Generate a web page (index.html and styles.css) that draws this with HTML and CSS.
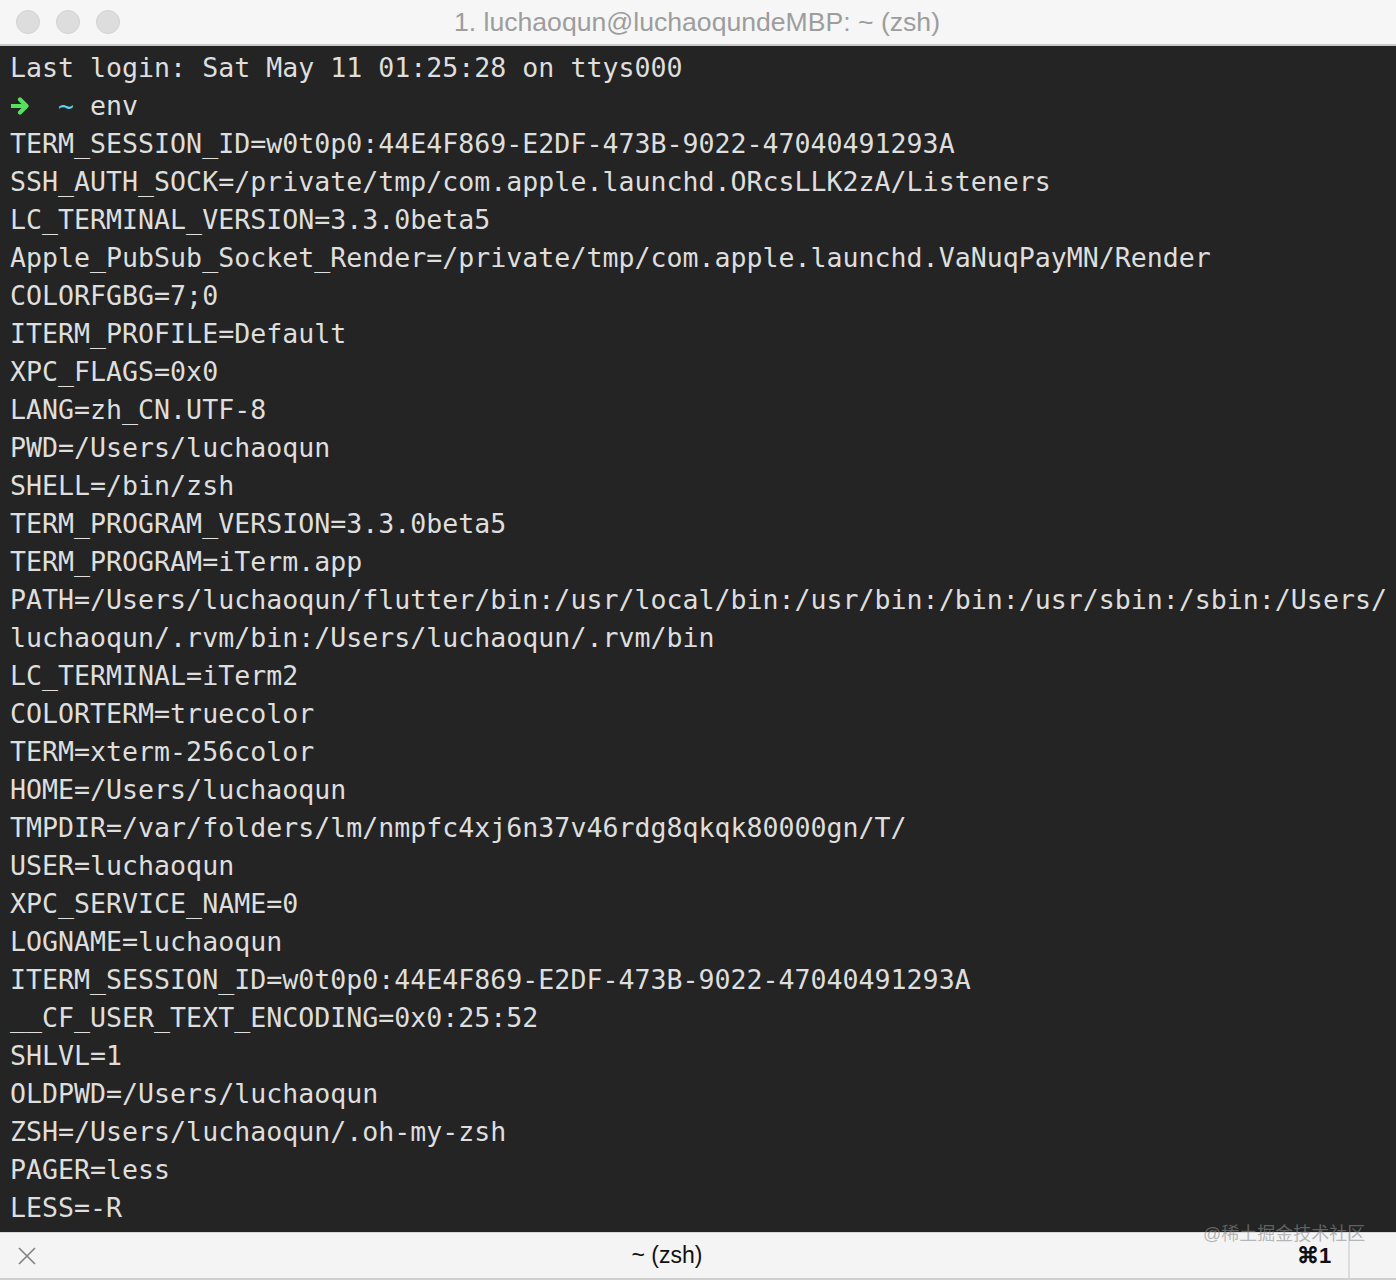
FILE: index.html
```html
<!DOCTYPE html>
<html>
<head>
<meta charset="utf-8">
<link rel="stylesheet" href="styles.css">
</head>
<body>
<div class="window">
  <div class="titlebar">
    <div class="lights">
      <span class="light"></span><span class="light"></span><span class="light"></span>
    </div>
    <div class="title">1. luchaoqun@luchaoqundeMBP: ~ (zsh)</div>
  </div>
  <div class="term">
<div class="line">Last login: Sat May 11 01:25:28 on ttys000</div>
<div class="line"><span class="arrow"><svg width="22" height="18" viewBox="0 0 22 18"><path d="M1 9 H14 M9 2.5 L15.5 9 L9 15.5" stroke="#55e05e" stroke-width="4.2" fill="none" stroke-linecap="round" stroke-linejoin="round"/></svg></span>  <span class="tilde">~</span> env</div>
<div class="line">TERM_SESSION_ID=w0t0p0:44E4F869-E2DF-473B-9022-47040491293A</div>
<div class="line">SSH_AUTH_SOCK=/private/tmp/com.apple.launchd.ORcsLLK2zA/Listeners</div>
<div class="line">LC_TERMINAL_VERSION=3.3.0beta5</div>
<div class="line">Apple_PubSub_Socket_Render=/private/tmp/com.apple.launchd.VaNuqPayMN/Render</div>
<div class="line">COLORFGBG=7;0</div>
<div class="line">ITERM_PROFILE=Default</div>
<div class="line">XPC_FLAGS=0x0</div>
<div class="line">LANG=zh_CN.UTF-8</div>
<div class="line">PWD=/Users/luchaoqun</div>
<div class="line">SHELL=/bin/zsh</div>
<div class="line">TERM_PROGRAM_VERSION=3.3.0beta5</div>
<div class="line">TERM_PROGRAM=iTerm.app</div>
<div class="line">PATH=/Users/luchaoqun/flutter/bin:/usr/local/bin:/usr/bin:/bin:/usr/sbin:/sbin:/Users/</div>
<div class="line">luchaoqun/.rvm/bin:/Users/luchaoqun/.rvm/bin</div>
<div class="line">LC_TERMINAL=iTerm2</div>
<div class="line">COLORTERM=truecolor</div>
<div class="line">TERM=xterm-256color</div>
<div class="line">HOME=/Users/luchaoqun</div>
<div class="line">TMPDIR=/var/folders/lm/nmpfc4xj6n37v46rdg8qkqk80000gn/T/</div>
<div class="line">USER=luchaoqun</div>
<div class="line">XPC_SERVICE_NAME=0</div>
<div class="line">LOGNAME=luchaoqun</div>
<div class="line">ITERM_SESSION_ID=w0t0p0:44E4F869-E2DF-473B-9022-47040491293A</div>
<div class="line">__CF_USER_TEXT_ENCODING=0x0:25:52</div>
<div class="line">SHLVL=1</div>
<div class="line">OLDPWD=/Users/luchaoqun</div>
<div class="line">ZSH=/Users/luchaoqun/.oh-my-zsh</div>
<div class="line">PAGER=less</div>
<div class="line">LESS=-R</div>
  </div>
  <div class="tabbar">
    <div class="close">
      <svg width="20" height="20" viewBox="0 0 20 20"><path d="M2 2 L18 18 M18 2 L2 18" stroke="#808080" stroke-width="1.6" fill="none"/></svg>
    </div>
    <div class="tabname">~ (zsh)</div>
    <div class="shortcut">⌘1</div>
    <div class="divider"></div>
    <div class="watermark">@稀土掘金技术社区</div>
  </div>
</div>
</body>
</html>
```
FILE: styles.css
```css
html, body {
  margin: 0;
  padding: 0;
  background: #f2f2f2;
}
.window {
  width: 1396px;
  height: 1280px;
  display: flex;
  flex-direction: column;
  overflow: hidden;
}
.titlebar {
  height: 44px;
  flex: none;
  background: #f6f6f6;
  border-bottom: 2px solid #c9c9c9;
  display: flex;
  align-items: center;
  position: relative;
}
.lights {
  display: flex;
  gap: 16px;
  padding-left: 16px;
}
.light {
  width: 24px;
  height: 24px;
  border-radius: 50%;
  background: #dddddd;
  border: 1px solid #d2d2d2;
  box-sizing: border-box;
}
.title {
  position: absolute;
  left: 0;
  right: 0;
  top: 0;
  height: 44px;
  line-height: 44px;
  text-align: center;
  font-family: "Liberation Sans", Arial, sans-serif;
  font-size: 26.6px;
  color: #9d9d9d;
  padding-right: 2px;
}
.term {
  flex: 1;
  background: #242424;
  padding: 3px 0 0 10px;
  font-family: "DejaVu Sans Mono", monospace;
  font-size: 26.6px;
  color: #dedede;
}
.line {
  height: 38px;
  line-height: 38px;
  white-space: pre;
}
.arrow {
  display: inline-block;
  width: 16px;
  height: 38px;
  vertical-align: top;
  position: relative;
}
.arrow svg {
  position: absolute;
  left: 1px;
  top: 10px;
}
.tilde {
  color: #5dd3f0;
}
.tabbar {
  height: 45px;
  flex: none;
  background: #f4f4f4;
  border-top: 1px solid #d8d8d8;
  border-bottom: 2px solid #d0d0d0;
  display: flex;
  align-items: center;
  position: relative;
  font-family: "Liberation Sans", Arial, sans-serif;
}
.close {
  width: 20px;
  height: 20px;
  margin-left: 17px;
  display: flex;
}
.tabname {
  position: absolute;
  left: 0;
  right: 0;
  text-align: center;
  font-size: 23px;
  color: #111;
  padding-right: 62px;
}
.shortcut {
  position: absolute;
  left: 1297px;
  top: 11px;
  line-height: 24px;
  font-size: 22px;
  font-weight: bold;
  color: #111;
}
.divider {
  position: absolute;
  left: 1348px;
  top: 0;
  width: 2px;
  height: 45px;
  background: #dcdcdc;
}
.watermark {
  position: absolute;
  left: 1203px;
  top: -9px;
  line-height: 20px;
  font-family: "Liberation Sans", "Noto Sans CJK SC", sans-serif;
  font-size: 18px;
  color: rgba(140, 140, 140, 0.6);
}
```
